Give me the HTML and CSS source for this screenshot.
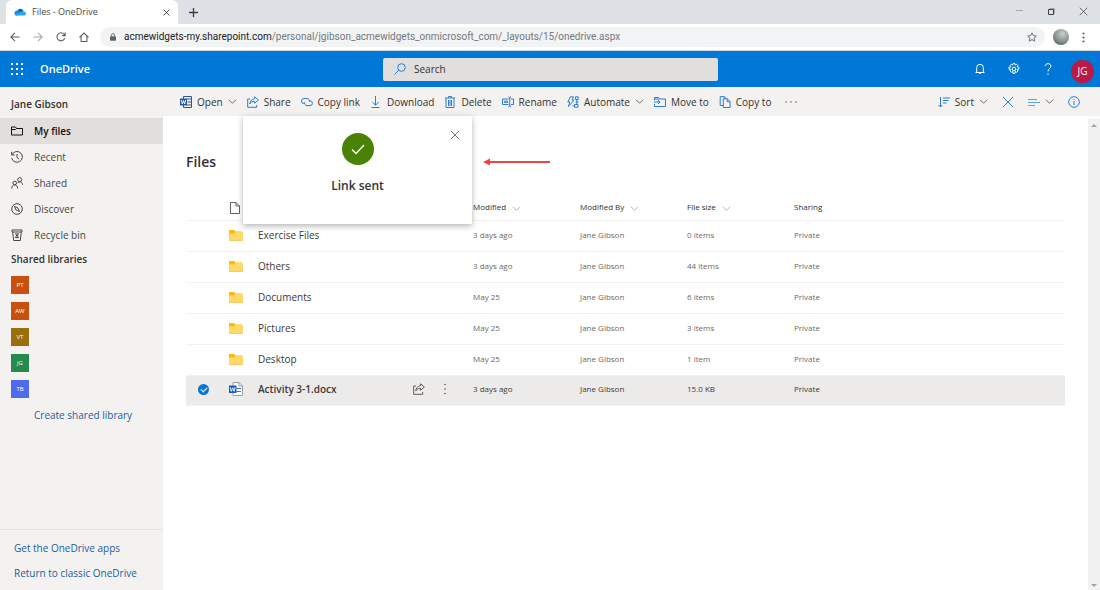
FILE: index.html
```html
<!DOCTYPE html>
<html lang="en">
<head>
<meta charset="utf-8">
<title>Files - OneDrive</title>
<link rel="stylesheet" href="styles.css">
</head>
<body>
<svg class="sprite" aria-hidden="true">
  <symbol id="chevron" viewBox="0 0 10 10"><path d="M1 3l4 4 4-4"/></symbol>
  <symbol id="close" viewBox="0 0 12 12"><path d="M1 1l10 10M11 1L1 11"/></symbol>
  <symbol id="share" viewBox="0 0 12 12"><path d="M3 3H.7v8.300h9V9M7.500.8L11.400 4 7.500 7.300V5.400C5.300 5.300 3.800 6.200 2.700 8c.3-2.700 2-5 4.800-5.300z"/></symbol>
  <symbol id="folder" viewBox="0 0 14 12"><path class="folder-back" d="M0 1.500Q0 1 .5 1H5l1.500 1.500H13v3H0z"/><path class="folder-front" d="M0 4.500h5l1.500-1.500H13.500q.5 0 .5.500v8H0z"/><path class="folder-base" d="M0 11h14v.8H0z"/></symbol>
</svg>

<div class="browser">
  <div class="tab-strip">
    <div class="tab">
      <svg class="cloud" viewBox="0 0 24 16"><path fill="#0a5dba" d="M7 5a6.500 6.500 0 0 1 12 1l-5 4z"/><path fill="#1188e0" d="M5 5.500c3-1 5 0 7 1.500l4 3-8 5H5A4.800 4.800 0 0 1 5 5.500z"/><path fill="#28a8ea" d="M13 8c4-3 10-2 11 3 0 3-2 4-4 4H5c-2 0-3-1-4-2z"/></svg>
      <span class="tab-title">Files - OneDrive</span>
      <button class="bare" aria-label="Close tab"><svg class="line dark s7 bold" viewBox="0 0 12 12"><use href="#close"/></svg></button>
    </div>
    <button class="bare new-tab" aria-label="New tab"><svg class="line dark s9 bold" viewBox="0 0 10 10"><path d="M5 0v10M0 5h10"/></svg></button>
    <div class="window-buttons">
      <button class="bare" aria-label="Minimize"><svg class="line pale s9" viewBox="0 0 9 9"><path d="M1 3.500h7"/></svg></button>
      <button class="bare" aria-label="Restore"><svg class="line dark s9" viewBox="0 0 9 9"><path d="M1.500 2.500h5v5h-5z"/><path class="pale" stroke="currentColor" d="M2.500 1.500h5v5"/></svg></button>
      <button class="bare" aria-label="Close"><svg class="line dark s9" viewBox="0 0 12 12"><use href="#close"/></svg></button>
    </div>
  </div>
  <div class="address-row">
    <button class="bare" aria-label="Back"><svg class="line grey s11 firm" viewBox="0 0 12 12"><path d="M11.500 6H1M6 1L1 6l5 5"/></svg></button>
    <button class="bare" aria-label="Forward"><svg class="line pale s11 firm" viewBox="0 0 12 12"><path d="M.5 6H11M6 1l5 5-5 5"/></svg></button>
    <button class="bare" aria-label="Reload"><svg class="line grey s11 firm" viewBox="0 0 12 12"><path d="M10.500 7.500A4.800 4.800 0 1 1 9.600 2.600L11 4M11 .5V4.300H7.300"/></svg></button>
    <button class="bare" aria-label="Home"><svg class="line grey s11 firm" viewBox="0 0 12 12"><path d="M.5 6.500L6 1.200l5.500 5.300M2.500 5v6.300h7V5"/></svg></button>
    <div class="address">
      <svg class="lock" viewBox="0 0 8 10"><path fill="#5f6368" d="M1 4h6q1 0 1 1v4q0 1-1 1H1q-1 0-1-1V5q0-1 1-1z"/><path fill="none" stroke="#5f6368" stroke-width="1.100" d="M2 4V2.500a2 2 0 0 1 4 0V4"/></svg>
      <span class="url"><b>acmewidgets-my.sharepoint.com</b>/personal/jgibson_acmewidgets_onmicrosoft_com/_layouts/15/onedrive.aspx</span>
      <button class="bare" aria-label="Bookmark"><svg class="line grey s11" viewBox="0 0 12 12"><path d="M6 1l1.500 3.400 3.700.4-2.800 2.500.8 3.700L6 9.100 2.800 11l.8-3.700L.8 4.800l3.700-.4z"/></svg></button>
    </div>
    <span class="profile"></span>
    <button class="bare" aria-label="Browser menu"><svg class="s13" viewBox="0 0 13 13" fill="#5f6368"><circle cx="6.500" cy="2.500" r="1.100"/><circle cx="6.500" cy="6.500" r="1.100"/><circle cx="6.500" cy="10.500" r="1.100"/></svg></button>
  </div>
</div>

<header class="suite">
  <button class="bare" aria-label="App launcher"><svg class="s12" viewBox="0 0 12 12" fill="#fff"><path d="M0 0h2v2H0zM5 0h2v2H5zM10 0h2v2h-2zM0 5h2v2H0zM5 5h2v2H5zM10 5h2v2h-2zM0 10h2v2H0zM5 10h2v2H5zM10 10h2v2h-2z"/></svg></button>
  <a class="brand" href="#">OneDrive</a>
  <label class="search">
    <svg class="line blue s12" viewBox="0 0 12 12"><circle cx="7.500" cy="4.500" r="3.800"/><path d="M4.800 7.200L.5 11.500"/></svg>
    <input type="text" placeholder="Search" aria-label="Search">
  </label>
  <div class="suite-icons">
    <button class="bare" aria-label="Notifications"><svg class="line white s12" viewBox="0 0 12 12"><path d="M1.500 9.500h9M2.700 9.500V4.600a3.300 3.300 0 0 1 6.600 0v4.900M5 9.800q1 1.700 2 0"/></svg></button>
    <button class="bare" aria-label="Settings"><svg class="line white s12" viewBox="0 0 12 12"><circle cx="6" cy="6" r="1.800"/><path d="M5 .6h2l.3 1.500 1.300-.9 1.400 1.400-.9 1.300 1.700.3v2l-1.700.4.900 1.300-1.400 1.400-1.300-.9-.3 1.900H5l-.3-1.900-1.300.9L2 7.900l.9-1.300-1.900-.4v-2l1.900-.3L2 2.600l1.400-1.400 1.300.9z"/></svg></button>
    <button class="bare" aria-label="Help"><svg class="line white s12" viewBox="0 0 12 12"><path d="M3.200 3.200C3.200-.2 8.900-.2 8.900 3.200 8.900 5.500 6 5.500 6 8.500M6 10.300v1.500"/></svg></button>
    <button class="avatar" aria-label="Account">JG</button>
  </div>
</header>

<div class="app">
  <nav class="sidebar">
    <h2 class="owner">Jane Gibson</h2>
    <a class="nav-item current" href="#"><svg class="line s12" viewBox="0 0 12 12"><path d="M.5 10V2h4l1 1.500h6V10zM.5 4.500h4l1-1"/></svg>My files</a>
    <a class="nav-item" href="#"><svg class="line s12" viewBox="0 0 12 12"><path d="M1 3.800A5.400 5.400 0 1 1 .7 7M.6.8v3.200h3.200M6 3v3.500l2 1.500"/></svg>Recent</a>
    <a class="nav-item" href="#"><svg class="line s12" viewBox="0 0 12 12"><circle cx="8.700" cy="2.700" r="2"/><circle cx="3.700" cy="6" r="1.800"/><path d="M.7 11.500c0-4.800 6-4.800 6 0M6.500 6.200c1.800-2.500 5-1.300 5 1.600"/></svg>Shared</a>
    <a class="nav-item" href="#"><svg class="line s12" viewBox="0 0 12 12"><circle cx="6" cy="6" r="5.300"/><path d="M3.500 3.500l3.500 1.500 1.500 3.500L5 7z"/></svg>Discover</a>
    <a class="nav-item" href="#"><svg class="line s12" viewBox="0 0 12 12"><path d="M1 1h10v2H1zM1.700 3l1 8.500h6.600l1-8.500M4.500 8.700h3L6 5.500zM4 5h4"/></svg>Recycle bin</a>
    <h3 class="group">Shared libraries</h3>
    <div class="libraries">
      <a class="tile orange" href="#">PT</a>
      <a class="tile orange" href="#">AW</a>
      <a class="tile olive" href="#">VT</a>
      <a class="tile green" href="#">JG</a>
      <a class="tile indigo" href="#">TB</a>
    </div>
    <a class="create" href="#">Create shared library</a>
    <div class="sidebar-foot">
      <a href="#">Get the OneDrive apps</a>
      <a href="#">Return to classic OneDrive</a>
    </div>
  </nav>

  <main class="content">
    <div class="commands">
      <button class="cmd"><svg class="line navy s12" viewBox="0 0 12 12"><path d="M3.500 3V.5h8v11h-8V9M6.500 3h5M7.500 6h4M6.500 9h5"/><path fill="#2b579a" stroke="none" d="M0 2.500h7v7H0z"/><path stroke="#fff" stroke-width=".9" d="M1.300 4l1 4 1.200-3.500L4.700 8l1-4"/></svg>Open<svg class="line grey s9" viewBox="0 0 10 10"><use href="#chevron"/></svg></button>
      <button class="cmd"><svg class="line blue s12" viewBox="0 0 12 12"><use href="#share"/></svg>Share</button>
      <button class="cmd"><svg class="line blue s12" viewBox="0 0 12 12"><path d="M4 7.500H3a2.500 2.500 0 0 1 0-5h3a2.500 2.500 0 0 1 2.300 3.300M8 4.800h1a2.400 2.400 0 0 1 0 4.800H6a2.400 2.400 0 0 1-2.200-3.300"/></svg>Copy link</button>
      <button class="cmd"><svg class="line blue s12" viewBox="0 0 12 12"><path d="M5.500 0v9M2.300 6L5.500 9.200 8.700 6M1.500 11.500h8"/></svg>Download</button>
      <button class="cmd"><svg class="line blue s12" viewBox="0 0 12 12"><path d="M1 2h10M4.500 2V.5h3V2M2 2v9.500h8V2M4.500 4v6M6 4v6M7.500 4v6"/></svg>Delete</button>
      <button class="cmd"><svg class="line blue s12" viewBox="0 0 12 12"><path d="M6.500 3H.5v5.500h6M9 3h2.500v5.500H9M6.500 1q1.200 0 1.200 1v7.500q0 1-1.200 1M9 1Q7.700 1 7.700 2M9 10.500q-1.300 0-1.300-1M2 5.200h4M2 6.300h4"/></svg>Rename</button>
      <button class="cmd"><svg class="line blue s12" viewBox="0 0 12 12"><path d="M3.500.8h3L5 4h2L1.500 10.500l1.300-4.700H.8zM8.500.8h2.700v2.700H8.500zM7.500 8.500h3.500v2.700H7.500zM9.800 3.500v5M5.500 10h2M8.500 6h3"/></svg>Automate<svg class="line grey s9" viewBox="0 0 10 10"><use href="#chevron"/></svg></button>
      <button class="cmd"><svg class="line blue s12" viewBox="0 0 12 12"><path d="M.5 4V1.500h4L5.500 3h6v7.500H.5V8M.5 3H5M0 6h6M4 4l2 2-2 2"/></svg>Move to</button>
      <button class="cmd"><svg class="line blue s12" viewBox="0 0 12 12"><path d="M4 9.500H1.200V.6h4l2 2M4.300 2.800h4l2.800 2.700v6H4.300zM8.200 2.800v2.900h2.900M5.300.6v2"/></svg>Copy to</button>
      <button class="cmd more" aria-label="More"><svg class="s12" viewBox="0 0 12 12" fill="#666"><circle cx="1" cy="6" r=".8"/><circle cx="6" cy="6" r=".8"/><circle cx="11" cy="6" r=".8"/></svg></button>
      <div class="view-commands">
        <button class="cmd"><svg class="line blue s12" viewBox="0 0 12 12"><path d="M2.500 1v10M.5 9l2 2 2-2M5 2h7M5 4.500h5.500M5 7h3.500"/></svg>Sort<svg class="line grey s9" viewBox="0 0 10 10"><use href="#chevron"/></svg></button>
        <button class="cmd" aria-label="Clear selection"><svg class="line blue s12" viewBox="0 0 12 12"><use href="#close"/></svg></button>
        <button class="cmd" aria-label="View options"><svg class="line sky s12" viewBox="0 0 12 12"><path d="M0 3.500h9M0 6.500h12M0 9.500h7"/></svg><svg class="line grey s9" viewBox="0 0 10 10"><use href="#chevron"/></svg></button>
        <button class="cmd" aria-label="Details"><svg class="line blue s12" viewBox="0 0 12 12"><circle cx="6" cy="6" r="5.300"/><path d="M6 5v4M6 3v1"/></svg></button>
      </div>
    </div>

    <div class="pane">
      <div class="files">
        <h1>Files</h1>
        <table>
          <colgroup><col class="c-check"><col class="c-icon"><col class="c-name"><col class="c-actions"><col class="c-meta"><col class="c-meta"><col class="c-meta"><col></colgroup>
          <thead>
            <tr>
              <th></th>
              <th><svg class="line grey s12" viewBox="0 0 12 12"><path d="M1.500.5h5.500l3.500 3.500v7.500h-9zM7 .5v3.500h3.500"/></svg></th>
              <th>Name</th>
              <th></th>
              <th>Modified<svg class="line pale s9" viewBox="0 0 10 10"><use href="#chevron"/></svg></th>
              <th>Modified By<svg class="line pale s9" viewBox="0 0 10 10"><use href="#chevron"/></svg></th>
              <th>File size<svg class="line pale s9" viewBox="0 0 10 10"><use href="#chevron"/></svg></th>
              <th>Sharing</th>
            </tr>
          </thead>
          <tbody>
            <tr><td></td><td><svg class="folder"><use href="#folder"/></svg></td><td class="name">Exercise Files</td><td></td><td>3 days ago</td><td>Jane Gibson</td><td>0 items</td><td>Private</td></tr>
            <tr><td></td><td><svg class="folder"><use href="#folder"/></svg></td><td class="name">Others</td><td></td><td>3 days ago</td><td>Jane Gibson</td><td>44 items</td><td>Private</td></tr>
            <tr><td></td><td><svg class="folder"><use href="#folder"/></svg></td><td class="name">Documents</td><td></td><td>May 25</td><td>Jane Gibson</td><td>6 items</td><td>Private</td></tr>
            <tr><td></td><td><svg class="folder"><use href="#folder"/></svg></td><td class="name">Pictures</td><td></td><td>May 25</td><td>Jane Gibson</td><td>3 items</td><td>Private</td></tr>
            <tr><td></td><td><svg class="folder"><use href="#folder"/></svg></td><td class="name">Desktop</td><td></td><td>May 25</td><td>Jane Gibson</td><td>1 item</td><td>Private</td></tr>
            <tr class="selected">
              <td class="pick"><input type="checkbox" checked aria-label="Select Activity 3-1.docx"></td>
              <td><svg class="doc" viewBox="0 0 14 14"><path fill="#fff" stroke="#8a8886" stroke-width=".8" d="M4 .5h6l3.500 3.500v9.500H4z"/><path fill="none" stroke="#8a8886" stroke-width=".8" d="M10 .5V4h3.500"/><path stroke="#2b7cd3" d="M7.500 6.500h4.500M7.500 9.500h4.500"/><path fill="#185abd" d="M0 3.500h7.500V11H0z"/><path fill="none" stroke="#fff" stroke-width=".9" d="M1.300 5.300l1 4 1.400-3.500 1.400 3.500 1-4"/></svg></td>
              <td class="name">Activity 3-1.docx</td>
              <td><div class="row-actions"><button class="bare" aria-label="Share file"><svg class="line grey s12" viewBox="0 0 12 12"><use href="#share"/></svg></button><button class="bare" aria-label="More actions"><svg class="s12" viewBox="0 0 12 12" fill="#555"><circle cx="6" cy="1.500" r=".8"/><circle cx="6" cy="6" r=".8"/><circle cx="6" cy="10.500" r=".8"/></svg></button></div></td>
              <td>3 days ago</td><td>Jane Gibson</td><td>15.0 KB</td><td>Private</td>
            </tr>
          </tbody>
        </table>
      </div>
      <div class="scrollbar"><span class="up"></span><span class="down"></span></div>

      <section class="dialog" role="dialog" aria-labelledby="dialog-title">
        <button class="bare dialog-close" aria-label="Close dialog"><svg class="line grey s11" viewBox="0 0 12 12"><use href="#close"/></svg></button>
        <svg class="success" viewBox="0 0 32 32"><circle cx="16" cy="16" r="16" fill="#498205"/><path fill="none" stroke="#fff" stroke-width="1.300" d="M10 16.500l4 4 8-8.500"/></svg>
        <h2 id="dialog-title">Link sent</h2>
      </section>
      <svg class="pointer" viewBox="0 0 68 8"><path fill="#f04444" d="M0 4l7-3.500v2.500H67v2H7v2.500z"/></svg>
    </div>
  </main>
</div>
</body>
</html>
```

FILE: styles.css
```css
* { box-sizing: border-box; }

body {
  margin: 0;
  min-height: 100vh;
  display: flex;
  flex-direction: column;
  font: 10px/14px "Open Sans", "Noto Sans", sans-serif;
  color: #323130;
  background: #fff;
}

h1, h2, h3 { margin: 0; font-weight: 600; }
a { color: inherit; text-decoration: none; }
svg { flex: none; display: block; }
button, input { font: inherit; color: inherit; }

.sprite { position: absolute; width: 0; height: 0; }

.bare {
  padding: 0;
  border: 0;
  background: none;
  display: flex;
}

.line { fill: none; stroke: currentColor; stroke-width: 1; }
.firm { stroke-width: 1.3; }
.bold { stroke-width: 1.5; }
.dark { color: #3c4043; }
.grey { color: #605e5c; }
.pale { color: #a9a9a9; }
.blue { color: #2b7cd3; }
.sky { color: #5ea5e0; }
.navy { color: #2b579a; }
.white { color: #fff; }

.s7 { width: 7px; height: 7px; }
.s9 { width: 9px; height: 9px; }
.s11 { width: 10px; height: 10px; }
.s12 { width: 12px; height: 12px; }
.s13 { width: 13px; height: 13px; }

/* Browser frame */
.tab-strip {
  display: flex;
  align-items: center;
  height: 24px;
  padding-left: 6px;
  background: #dee1e6;
}

.tab {
  display: flex;
  align-items: center;
  gap: 6px;
  width: 172px;
  height: 24px;
  padding: 0 8px;
  border-radius: 6px 6px 0 0;
  background: #fff;
}

.cloud { width: 12px; height: 8px; }
.tab-title { flex: 1; font-size: 9px; color: #45494d; }
.new-tab { margin-left: 11px; }

.window-buttons {
  display: flex;
  gap: 23px;
  margin: 0 12px 2px auto;
}

.address-row {
  display: flex;
  align-items: center;
  gap: 13px;
  height: 27px;
  padding: 0 10px;
  border-bottom: 1px solid #d5d8dc;
}

.address {
  flex: 1;
  display: flex;
  align-items: center;
  gap: 8px;
  height: 20px;
  margin: 0 -5px 0 -2px;
  padding: 0 8px 0 10px;
  border-radius: 10px;
  background: #f1f3f4;
}

.lock { width: 6px; height: 8px; }
.url { flex: 1; font-family: Roboto, sans-serif; color: #75797d; }
.url b { font-weight: 400; color: #202124; }

.profile {
  width: 16px;
  height: 16px;
  margin-right: -5px;
  border-radius: 50%;
  background: radial-gradient(circle at 60% 30%, #c9cfcc, #8d9692 50%, #3f4744);
}

/* Suite header */
.suite {
  display: flex;
  align-items: center;
  height: 36px;
  padding: 0 6px 0 11px;
  color: #fff;
  background: #0078d7;
}

.brand {
  width: 344px;
  padding-left: 17px;
  font-size: 11px;
  font-weight: 600;
}

.search {
  flex: 0 1 335px;
  display: flex;
  align-items: center;
  gap: 8px;
  height: 23px;
  margin-left: 16px;
  padding: 0 11px;
  border-radius: 2px;
  background: #e1dfdd;
}

.search input {
  flex: 1;
  min-width: 0;
  padding: 0;
  border: 0;
  outline: 0;
  background: none;
  color: #323130;
}

.search input::placeholder { color: #323130; opacity: 1; }

.suite-icons {
  display: flex;
  align-items: center;
  gap: 22px;
  margin-left: auto;
}

.avatar {
  width: 23px;
  height: 23px;
  margin: 4px 0 0 -5px;
  padding: 0;
  border: 0;
  border-radius: 50%;
  color: #fff;
  background: #ba1a45;
}

/* Layout */
.app { flex: 1; display: flex; }

.sidebar {
  flex: none;
  display: flex;
  flex-direction: column;
  width: 163px;
  background: #f3f2f1;
}

.owner {
  padding: 10px 11px 7px;
  font-size: 10px;
}

.nav-item {
  display: flex;
  align-items: center;
  gap: 11px;
  height: 26px;
  padding-left: 11px;
  color: #484644;
}

.current {
  font-weight: 600;
  color: #111;
  background: #e1dfdd;
}

.group {
  padding: 4px 11px;
  font-size: 10px;
}

.libraries {
  display: grid;
  gap: 8px;
  padding: 6px 11px 0;
}

.tile {
  width: 18px;
  height: 18px;
  font-size: 6px;
  line-height: 18px;
  text-align: center;
  color: #fff;
}

.orange { background: #ca5010; }
.olive { background: #986f0b; }
.green { background: #248a4d; }
.indigo { background: #4f6bed; }

.create {
  padding: 10px 11px 0 34px;
  color: #1b5e96;
}

.sidebar-foot {
  display: grid;
  gap: 11px;
  margin-top: auto;
  padding: 11px 14px 10px;
  border-top: 1px solid #e5e3e1;
  color: #1b5e96;
}

.content {
  flex: 1;
  min-width: 0;
  display: flex;
  flex-direction: column;
}

/* Command bar */
.commands, .view-commands {
  display: flex;
  align-items: center;
  gap: 10px;
}

.commands {
  height: 29px;
  padding: 0 20px 0 17px;
  background: #f3f2f1;
}

.view-commands { gap: 14px; margin-left: auto; }

.cmd {
  display: flex;
  align-items: center;
  gap: 5px;
  padding: 0;
  border: 0;
  background: none;
  white-space: nowrap;
}

.more { padding-left: 4px; }

/* File list */
.pane {
  flex: 1;
  position: relative;
  display: flex;
}

.files { flex: 1; min-width: 0; padding: 37px 23px 0; }
.files h1 { font-size: 14px; line-height: 18px; }

table {
  width: 100%;
  margin-top: 24px;
  border-collapse: collapse;
  table-layout: fixed;
}

.c-check { width: 43px; }
.c-icon { width: 29px; }
.c-name { width: 155px; }
.c-actions { width: 60px; }
.c-meta { width: 107px; }

tr { height: 31px; border-bottom: 1px solid #f3f2f1; }
thead tr { height: 25px; }

th, td {
  padding: 0;
  font-size: 8px;
  font-weight: 400;
  text-align: left;
  white-space: nowrap;
}

td { padding-bottom: 2px; color: #6b6967; }
th svg { display: inline-block; vertical-align: middle; }
th .s9 { margin-left: 6px; }
.name { font-size: 10px; color: #3b3a39; }

.folder { width: 14px; height: 12px; }
.folder-back { fill: #ffb900; }
.folder-front { fill: #ffd869; }
.folder-base { fill: #f5c555; }
.doc { width: 14px; height: 14px; }

.selected { height: 30px; background: #edebe9; }
.selected td { color: #3b3a39; }
.selected .name { font-weight: 600; }
.selected .pick { padding-left: 12px; }

.pick input {
  appearance: none;
  display: block;
  width: 11px;
  height: 11px;
  margin: 0;
  border-radius: 50%;
  background: #0078d7;
}

.pick input::after {
  content: "";
  display: block;
  width: 3px;
  height: 5px;
  margin: 2px 4px;
  border: solid #fff;
  border-width: 0 1px 1px 0;
  transform: rotate(45deg);
}

.row-actions { display: flex; gap: 14px; }

.scrollbar {
  display: flex;
  flex-direction: column;
  justify-content: space-between;
  align-items: center;
  width: 12px;
  margin-top: 3px;
  padding: 5px 0 3px;
  background: #f1f1f1;
}

.up, .down { border: 3px solid transparent; }
.up { border-top: 0; border-bottom-color: #a3a3a3; }
.down { border-bottom: 0; border-top-color: #a3a3a3; }

/* Confirmation */
.dialog {
  position: absolute;
  top: 0;
  left: 80px;
  display: flex;
  flex-direction: column;
  align-items: center;
  gap: 12px;
  width: 229px;
  padding: 17px 0 29px;
  background: #fff;
  box-shadow: 0 2px 6px rgba(0, 0, 0, .3);
}

.dialog h2 { font-size: 12px; line-height: 18px; }
.dialog-close { position: absolute; top: 14px; right: 12px; }
.success { width: 32px; height: 32px; }

.pointer {
  position: absolute;
  top: 42px;
  left: 320px;
  width: 68px;
  height: 8px;
}
```
